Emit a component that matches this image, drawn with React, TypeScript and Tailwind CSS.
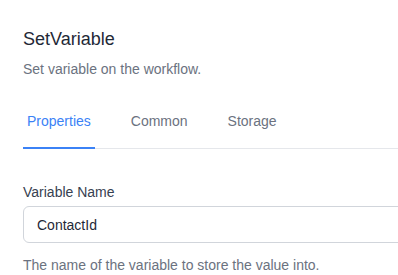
export default function App() {
  const tabs = ['Properties', 'Common', 'Storage'];
  return (
    <div className="w-[398px] h-[275px] overflow-hidden bg-white" style={{ fontFamily: '"Liberation Sans", Arial, sans-serif' }}>
      <div className="w-[440px] pl-[23px] pt-[25px]">
        <h2 className="text-lg leading-7 text-[#1f2937]">SetVariable</h2>
        <p className="mt-1.5 text-sm leading-5 text-[#6b7280]">Set variable on the workflow.</p>

        <div className="mt-8 flex gap-8 border-b border-[#e5e7eb]">
          {tabs.map((t, i) => (
            <button
              key={t}
              className={
                i === 0
                  ? '-mb-px px-1 pb-4 text-sm leading-5 border-b-2 border-[#3b82f6] text-[#3b82f6]'
                  : '-mb-px px-1 pb-4 text-sm leading-5 border-b-2 border-transparent text-[#6b7280]'
              }
            >
              {t}
            </button>
          ))}
        </div>

        <div className="mt-[33px]">
          <label className="block text-sm leading-5 text-[#374151]">Variable Name</label>
          <input
            type="text"
            defaultValue="ContactId"
            className="mt-1 block w-full h-[37px] px-[13px] text-sm text-[#1f2937] border border-[#d1d5db] rounded-md outline-none"
          />
          <p className="mt-3 text-sm leading-5 text-[#6b7280]">The name of the variable to store the value into.</p>
        </div>
      </div>
    </div>
  );
}
